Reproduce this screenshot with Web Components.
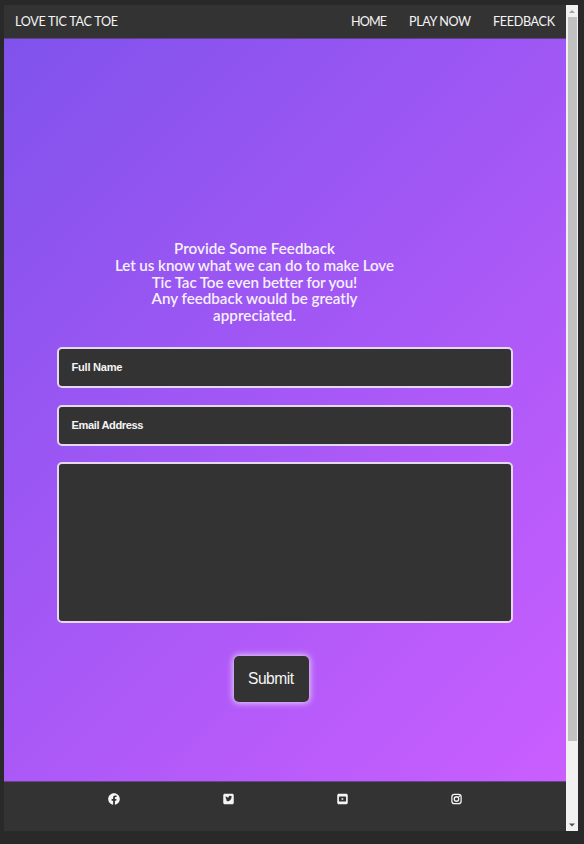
<!DOCTYPE html>
<html lang="en"><head><meta charset="utf-8"><title>Love Tic Tac Toe</title>
<style>html,body{margin:0;height:100%;background:#292929}</style></head>
<body><feedback-page></feedback-page>
<script>
const define=(name,html,setup)=>customElements.define(name,class extends HTMLElement{
  constructor(){super();const t=document.createElement('template');t.innerHTML=html;
    this.attachShadow({mode:'open'}).append(t.content.cloneNode(true))}
  connectedCallback(){if(setup)setup(this)}
});
// A line of text whose tracking is adjusted to a given measure.
define('fit-line',`<style>:host{display:block;white-space:nowrap}span{display:inline-block}</style><span><slot></slot></span>`,el=>{
  const s=el.shadowRoot.querySelector('span'),n=el.textContent.length,w=+el.getAttribute('width');
  const gap=(w-s.getBoundingClientRect().width)/(n-1);
  s.style.letterSpacing=gap+'px';s.style.marginRight=-gap+'px';
});
define('site-header',`<style>:host{display:flex;box-sizing:border-box;height:34px;padding:0 11px;justify-content:space-between;align-items:center;background:#333;border-bottom:1px solid #5d4288;color:#f5f5f5;font:12.6px/33px Lato,sans-serif}nav{display:flex;gap:22px}</style>
<fit-line width="103">LOVE TIC TAC TOE</fit-line><nav><fit-line width="36">HOME</fit-line><fit-line width="62">PLAY NOW</fit-line><fit-line width="62">FEEDBACK</fit-line></nav>`);
define('text-field',`<style>:host{display:block;box-sizing:border-box;width:456px;height:41px;padding:0 12.5px;border:2px solid #e5d8ef;border-radius:5px;background:#333;color:#f5f5f5;font:bold 11.1px/37px "Liberation Sans",Arial,sans-serif}:host([large]){height:161px}</style><slot></slot>`);
define('submit-button',`<style>:host{display:flex;justify-content:center;width:75px;height:46px;border-radius:5px;background:#333;box-shadow:0 0 6px 1px #e6d5f5;color:#f5f5f5;font:15.6px/46px "Liberation Sans",Arial,sans-serif}</style><slot></slot>`);
define('feedback-form',`<style>:host{display:flex;flex-direction:column;align-items:flex-start;flex:1;min-height:0;box-sizing:border-box;padding:201px 0 0 53px;background:linear-gradient(135deg,#8052ec,#ca5eff)}
.intro{width:395px;display:flex;flex-direction:column;align-items:center;color:#f5effc;font:600 15.2px/16.8px Lato,sans-serif;margin-bottom:23px}
.fields{display:flex;flex-direction:column;gap:16.6px}submit-button{margin:32.8px 0 0 176.5px}</style>
<div class="intro"><fit-line width="161">Provide Some Feedback</fit-line><fit-line width="279">Let us know what we can do to make Love</fit-line><fit-line width="205">Tic Tac Toe even better for you!</fit-line><fit-line width="206">Any feedback would be greatly</fit-line><fit-line width="83">appreciated.</fit-line></div>
<div class="fields"><text-field><fit-line width="51">Full Name</fit-line></text-field><text-field><fit-line width="72">Email Address</fit-line></text-field><text-field large></text-field></div><submit-button><fit-line width="46">Submit</fit-line></submit-button>`);
const rounded='M64 32C28.7 32 0 60.7 0 96V416c0 35.3 28.7 64 64 64H384c35.3 0 64-28.7 64-64V96c0-35.3-28.7-64-64-64H64z';
const icons={
facebook:['0 0 512 512','M504 256C504 119 393 8 256 8S8 119 8 256c0 123.78 90.69 226.38 209.25 245V327.69h-63V256h63v-54.64c0-62.15 37-96.48 93.67-96.48 27.14 0 55.52 4.84 55.52 4.84v61h-31.28c-30.8 0-40.41 19.12-40.41 38.73V256h68.78l-11 71.69h-57.78V501C413.31 482.38 504 379.78 504 256z',12,12],
twitter:['0 0 448 512',rounded+'M352 184c0 100-76 168-166 168-35 0-66-9-92-27 32 3 60-5 82-23-25-1-46-17-53-40h25c-28-7-47-30-47-58l26 7c-25-18-32-51-17-77 31 37 73 57 119 60-12-51 27-75 58-75 16 0 32 7 43 18l37-14-26 32 34-9z',11,12],
youtube:['0 0 448 512',rounded+'M108 146Q72 146 72 186V326Q72 366 108 366H340Q376 366 376 326V186Q376 146 340 146ZM190 202 282 256 190 310Z',11,12],
instagram:['0 0 448 512','M132 32H316Q448 32 448 164V348Q448 480 316 480H132Q0 480 0 348V164Q0 32 132 32ZM134 85Q53 85 53 166V346Q53 427 134 427H314Q395 427 395 346V166Q395 85 314 85ZM224 133a123 123 0 1 0 0 246 123 123 0 1 0 0-246ZM224 188a68 68 0 1 1 0 136 68 68 0 1 1 0-136ZM344 104a32 32 0 1 0 0 64 32 32 0 1 0 0-64Z',11,12]};
define('social-icon',`<style>:host{display:flex;justify-content:center}svg{display:block}</style><svg><path fill="#f5f5f5" fill-rule="evenodd"/></svg>`,el=>{
 const [v,d,w,h]=icons[el.getAttribute('name')],s=el.shadowRoot.querySelector('svg');
 s.setAttribute('viewBox',v);s.setAttribute('width',w);s.setAttribute('height',h);s.firstChild.setAttribute('d',d);
});
define('site-footer',`<style>:host{display:grid;grid-template-columns:repeat(4,114.4px);box-sizing:border-box;height:50px;padding:11px 0 0 52.5px;border-top:1px solid #6b458c;background:#333;align-items:start}</style>
<social-icon name="facebook"></social-icon><social-icon name="twitter"></social-icon><social-icon name="youtube"></social-icon><social-icon name="instagram"></social-icon>`);
define('scroll-track',`<style>:host{display:flex;flex-direction:column;align-items:center;width:12px;background:#f1f1f1}svg{display:block;width:12px;height:12px}i{width:9px;height:724px;background:#c1c1c1}svg:last-child{margin-top:auto}</style>
<svg viewBox="0 0 12 12"><path d="M3 8 6 5 9 8Z" fill="#a3a3a3"/></svg><i></i><svg viewBox="0 0 12 12"><path d="M3 4.5H9L6 7.5Z" fill="#505050"/></svg>`);
define('feedback-page',`<style>:host{display:flex;box-sizing:border-box;width:584px;height:844px;padding:5px 6px 13px 4px;background:#292929}main{display:flex;flex-direction:column;width:562px}</style>
<main><site-header></site-header><feedback-form></feedback-form><site-footer></site-footer></main><scroll-track></scroll-track>`);
</script></body></html>
